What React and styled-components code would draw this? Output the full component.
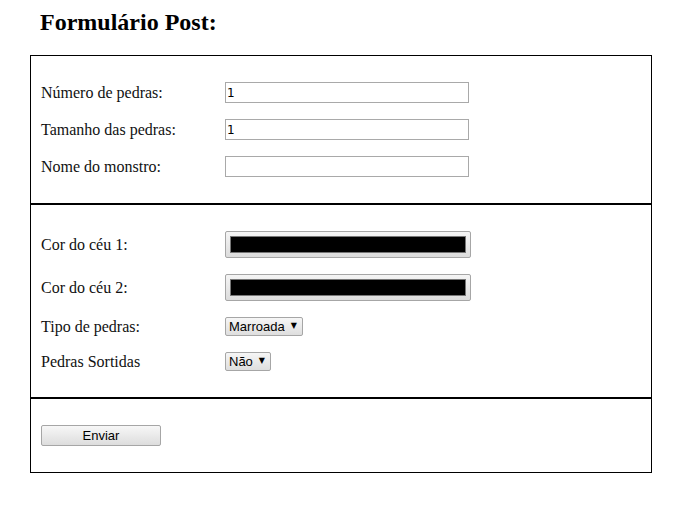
import styled, { createGlobalStyle } from 'styled-components'

const GlobalStyle = createGlobalStyle`
  body {
    margin: 0;
    background: #fff;
    font-family: "Liberation Serif", "Times New Roman", serif;
  }
`

const Page = styled.div`
  padding: 8px 38px 40px 30px;
`

const Title = styled.h2`
  margin: 0 0 19px 10px;
  font-size: 24px;
  font-weight: bold;
  color: #000;
  line-height: 28px;
`

const FormBox = styled.form`
  width: 620px;
  border: 1px solid #000;
`

const Section = styled.div`
  display: grid;
  grid-template-columns: 184px auto;
  justify-items: start;
  align-items: center;
  row-gap: 16px;
  padding: 26px 10px;
  border-bottom: ${(p) => (p.$last ? 'none' : '2px solid #000')};
`

const Label = styled.label`
  font-size: 16px;
  color: #111;
  line-height: 18px;
`

const TextInput = styled.input`
  box-sizing: border-box;
  width: 244px;
  height: 21px;
  margin: 0;
  padding: 0 2px 0 1px;
  border: 1px solid #a9a9a9;
  font-family: "DejaVu Sans", Verdana, sans-serif;
  font-size: 12px;
  color: #000;
  outline: none;
`

const ColorInput = styled.input`
  -webkit-appearance: none;
  appearance: none;
  box-sizing: border-box;
  width: 246px;
  height: 27px;
  margin: 0;
  padding: 4px;
  border: 1px solid #a6a6a6;
  border-radius: 2px;
  background: linear-gradient(#f5f5f5, #dcdcdc);
  cursor: pointer;

  &::-webkit-color-swatch-wrapper {
    padding: 0;
  }
  &::-webkit-color-swatch {
    border: 1px solid #777;
    border-radius: 0;
  }
`

const SelectWrap = styled.span`
  position: relative;
  display: inline-block;

  &::after {
    content: '▼';
    position: absolute;
    right: 6px;
    top: 4px;
    font-family: "DejaVu Sans", sans-serif;
    font-size: 8px;
    color: #000;
    pointer-events: none;
  }
`

const Select = styled.select`
  -webkit-appearance: none;
  appearance: none;
  box-sizing: border-box;
  height: 19px;
  margin: 0;
  padding: 0 17px 0 3px;
  border: 1px solid #a6a6a6;
  border-radius: 2px;
  background: linear-gradient(#f6f6f6, #dedede);
  font-family: "Liberation Sans", Arial, sans-serif;
  font-size: 13px;
  color: #000;
  outline: none;
`

const SubmitButton = styled.button`
  box-sizing: border-box;
  width: 120px;
  height: 21px;
  margin: 0;
  padding: 0;
  border: 1px solid #a6a6a6;
  border-radius: 2px;
  background: linear-gradient(#f7f7f7, #dddddd);
  font-family: "Liberation Sans", Arial, sans-serif;
  font-size: 13px;
  color: #000;
`

export default function App() {
  return (
    <Page>
      <GlobalStyle />
      <Title>Formulário Post:</Title>
      <FormBox onSubmit={(e) => e.preventDefault()}>
        <Section>
          <Label htmlFor="pedras">Número de pedras:</Label>
          <TextInput id="pedras" defaultValue="1" />
          <Label htmlFor="tamanho">Tamanho das pedras:</Label>
          <TextInput id="tamanho" defaultValue="1" />
          <Label htmlFor="monstro">Nome do monstro:</Label>
          <TextInput id="monstro" defaultValue="" />
        </Section>
        <Section>
          <Label htmlFor="ceu1">Cor do céu 1:</Label>
          <ColorInput id="ceu1" type="color" defaultValue="#000000" />
          <Label htmlFor="ceu2">Cor do céu 2:</Label>
          <ColorInput id="ceu2" type="color" defaultValue="#000000" />
          <Label htmlFor="tipo">Tipo de pedras:</Label>
          <SelectWrap>
            <Select id="tipo" defaultValue="marroada">
              <option value="marroada">Marroada</option>
              <option value="lisa">Lisa</option>
            </Select>
          </SelectWrap>
          <Label htmlFor="sortidas">Pedras Sortidas</Label>
          <SelectWrap>
            <Select id="sortidas" defaultValue="nao">
              <option value="nao">Não</option>
              <option value="sim">Sim</option>
            </Select>
          </SelectWrap>
        </Section>
        <Section $last>
          <SubmitButton type="submit">Enviar</SubmitButton>
        </Section>
      </FormBox>
    </Page>
  )
}
